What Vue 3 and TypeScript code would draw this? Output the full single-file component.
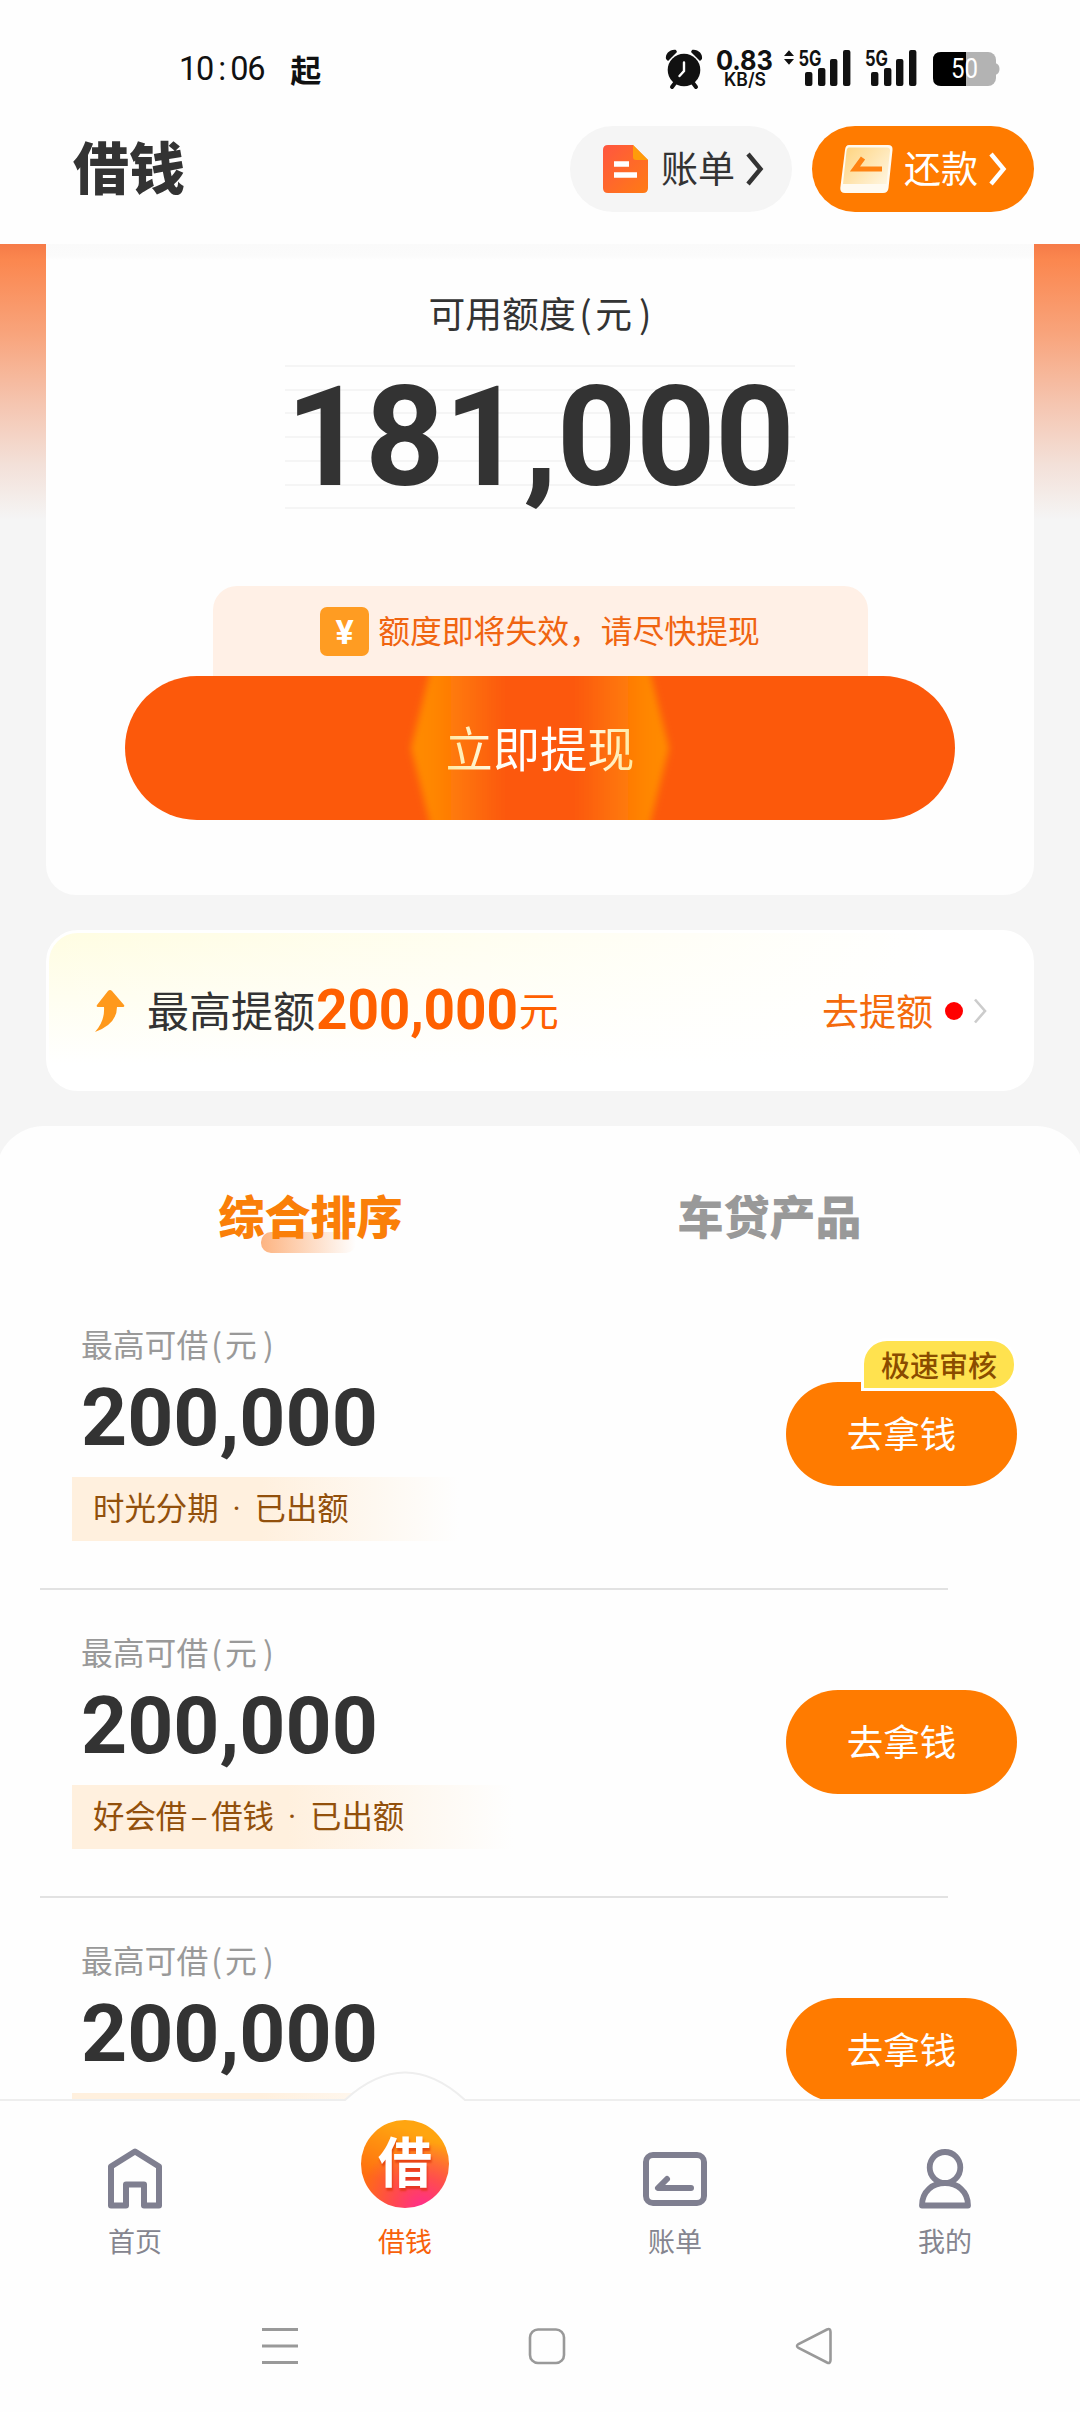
<script setup lang="ts">
interface Product {
  amount: string
  name: string[]
  status: string
  badge?: string
}

const products: Product[] = [
  { amount: '200,000', name: ['时光分期'], status: '已出额', badge: '极速审核' },
  { amount: '200,000', name: ['好会借', '借钱'], status: '已出额' },
  { amount: '200,000', name: ['时光分期'], status: '已出额' },
]

const tabs: string[] = ['综合排序', '车贷产品']
const bars: number[][] = [
  [0, 22, 14],
  [13, 18, 18],
  [25, 9, 27],
  [38, 0, 36],
]
</script>

<template>
  <div class="screen">
    <div class="status">
      <div class="status-left">
        <span class="time">10<i>:</i>06</span>
        <b class="app-mark">起</b>
      </div>
      <div class="status-right">
        <svg class="alarm" width="38" height="40" viewBox="0 0 38 40">
          <circle cx="19" cy="21" r="16.3" fill="#111" />
          <path d="M1 10C0 5 5 0 11 1L12 3L3 12ZM37 10C38 5 33 0 27 1L26 3L35 12Z" fill="#111" />
          <path d="M10 34L7 38M28 34L31 38" stroke="#111" stroke-width="4" stroke-linecap="round" />
          <path d="M19 13.5V22L14.5 27" fill="none" stroke="#fff" stroke-width="2.4" stroke-linecap="round" />
        </svg>
        <svg class="speed" width="58" height="40" viewBox="0 0 58 40">
          <text x="0" y="21" class="sp-num" textLength="57" lengthAdjust="spacingAndGlyphs">0.83</text>
          <text x="8" y="37" class="sp-unit" textLength="42" lengthAdjust="spacingAndGlyphs">KB/S</text>
        </svg>
        <svg class="signal-a" width="66" height="40" viewBox="0 0 66 40">
          <path d="M0 7L5 1.2L10 7ZM0 10L5 15.8L10 10Z" fill="#111" />
          <text x="14.5" y="16.5" class="net" textLength="23" lengthAdjust="spacingAndGlyphs">5G</text>
          <rect v-for="b in bars" :key="b[0]" :x="b[0] + 21" :y="b[1] + 1" width="7.4" :height="b[2]" rx="2" fill="#111" />
        </svg>
        <svg class="signal-b" width="52" height="40" viewBox="0 0 52 40">
          <text x="0" y="16.5" class="net" textLength="23" lengthAdjust="spacingAndGlyphs">5G</text>
          <rect v-for="b in bars" :key="b[0]" :x="b[0] + 6" :y="b[1] + 1" width="7.4" :height="b[2]" rx="2" fill="#111" />
        </svg>
        <svg class="battery" width="67" height="34" viewBox="0 0 67 34">
          <rect x="0" y="0" width="63" height="34" rx="8" fill="#b3b3b3" />
          <path d="M62 11Q66.5 12 66.5 17T62 23Z" fill="#b3b3b3" />
          <path d="M8 0H33V34H8Q0 34 0 26V8Q0 0 8 0Z" fill="#000" />
          <text x="18" y="26" class="pct" textLength="27" lengthAdjust="spacingAndGlyphs">50</text>
        </svg>
      </div>
    </div>

    <header class="header">
      <h1 class="title">借钱</h1>
      <div class="pill pill-bill">
        <svg width="45" height="50" viewBox="0 0 45 50">
          <defs>
            <linearGradient id="doc" x1="0" y1="0" x2="1" y2="1">
              <stop offset="0" stop-color="#ff5640" /><stop offset="1" stop-color="#ff7b14" />
            </linearGradient>
          </defs>
          <path d="M5 1H30L45 16V44Q45 49 40 49H5Q0 49 0 44V6Q0 1 5 1Z" fill="url(#doc)" />
          <path d="M30 1L45 16H33Q30 16 30 13Z" fill="#ff9c0a" />
          <path d="M11 20H26M11 31H34" stroke="#fff" stroke-width="5.4" />
        </svg>
        <span>账单</span>
        <svg class="chev" width="20" height="32" viewBox="0 0 20 32"><path d="M3 1L15.5 16L3 31" fill="none" stroke="#333" stroke-width="4.4" /></svg>
      </div>
      <div class="pill pill-repay">
        <svg width="53" height="50" viewBox="0 0 53 50">
          <defs>
            <linearGradient id="card" x1="0" y1=".2" x2="1" y2=".9">
              <stop offset="0" stop-color="#ffd685" /><stop offset="1" stop-color="#fff5df" />
            </linearGradient>
          </defs>
          <path d="M9 1H48Q53 1 52.5 6L48.5 44Q48 49 43 49H5Q0 49 .3 44L5 6Q5.5 1 9 1Z" fill="#fffaf0" />
          <path d="M9 3.5H47Q50.5 3.5 50 7L46.5 40H3L6.5 7Q7 3.5 9 3.5Z" fill="url(#card)" />
          <path d="M23 14L15 25H42" fill="none" stroke="#ff8212" stroke-width="5.2" />
        </svg>
        <span>还款</span>
        <svg class="chev" width="20" height="32" viewBox="0 0 20 32"><path d="M3 1L15.5 16L3 31" fill="none" stroke="#fff" stroke-width="4.4" /></svg>
      </div>
    </header>

    <main class="content">
      <section class="hero">
        <div class="quota">
          <div class="quota-label">可用额度<i>(</i>元<i>)</i></div>
          <div class="quota-num">181,000</div>
          <div class="notice">
            <span class="yen">¥</span>
            <span class="notice-text">额度即将失效，请尽快提现</span>
          </div>
          <div class="cta">
            <svg class="cta-glow" width="290" height="144" viewBox="0 0 290 144">
              <defs>
                <linearGradient id="glow" x1="0" x2="1">
                  <stop offset="0" stop-color="#ff8c05" /><stop offset=".09" stop-color="#ff8605" />
                  <stop offset=".36" stop-color="#fc590b" /><stop offset=".64" stop-color="#fc590b" />
                  <stop offset=".91" stop-color="#ff8605" /><stop offset="1" stop-color="#ff8c05" />
                </linearGradient>
                <filter id="soft" x="-10%" y="-20%" width="120%" height="140%"><feGaussianBlur stdDeviation="3.5" /></filter>
              </defs>
              <path d="M39 -20L16 72L39 164H251L274 72L251 -20Z" fill="url(#glow)" filter="url(#soft)" />
            </svg>
            <span class="cta-text">立即提现</span>
          </div>
        </div>
      </section>

      <section class="raise">
        <svg width="30" height="42" viewBox="0 0 30 42">
          <path d="M15 0Q16 0 17 1L29 15Q30 17 28 17H22Q22 34 0 42Q10 31 9 17H3Q1 17 2 15L13 1Q14 0 15 0Z" fill="#ff991c" />
        </svg>
        <span class="raise-text">最高提额</span>
        <span class="raise-num">200,000</span>
        <span class="raise-unit">元</span>
        <span class="raise-go">去提额</span>
        <span class="dot"></span>
        <svg class="raise-chev" width="14" height="26" viewBox="0 0 14 26"><path d="M2 1.5L12 13L2 24.5" fill="none" stroke="#ccc" stroke-width="2.6" /></svg>
      </section>

      <section class="panel">
        <nav class="tabs">
          <div v-for="(t, i) in tabs" :key="t" class="tab" :class="{ active: i === 0 }"><span>{{ t }}</span></div>
        </nav>
        <article v-for="(p, i) in products" :key="i" class="row">
          <div class="info">
            <div class="row-label">最高可借<i>(</i>元<i>)</i></div>
            <div class="row-num">{{ p.amount }}</div>
            <div class="tag">
              <template v-for="(part, n) in p.name" :key="n"><em v-if="n > 0">–</em>{{ part }}</template><i>·</i>{{ p.status }}
            </div>
          </div>
          <div class="get">
            去拿钱
            <span v-if="p.badge" class="badge">{{ p.badge }}</span>
          </div>
        </article>
      </section>
    </main>

    <footer class="tabbar">
      <svg class="edge" width="1080" height="32" viewBox="0 0 1080 32">
        <path d="M0 29H345Q375 1.5 405 1.5T465 29H1080V32H0Z" fill="#fefefe" />
        <path d="M0 29H345Q375 1.5 405 1.5T465 29H1080" fill="none" stroke="#eee" stroke-width="2" />
      </svg>
      <div class="item">
        <div class="ico">
          <svg width="54" height="62" viewBox="0 0 54 62">
            <path d="M3 18.5L27 3.5L51 18.5V57.5H36V36.5H18V57.5H3Z" fill="none" stroke="#7f7f90" stroke-width="6" stroke-linejoin="round" />
          </svg>
        </div>
        <span>首页</span>
      </div>
      <div class="item on">
        <div class="ico"><div class="coin"><b>借</b></div></div>
        <span>借钱</span>
      </div>
      <div class="item">
        <div class="ico">
          <svg width="64" height="56" viewBox="0 0 64 56">
            <rect x="3" y="4" width="58" height="48" rx="7" fill="none" stroke="#7f7f90" stroke-width="6" />
            <path d="M24 28L15 37H48" fill="none" stroke="#7f7f90" stroke-width="6" stroke-linecap="round" stroke-linejoin="round" />
          </svg>
        </div>
        <span>账单</span>
      </div>
      <div class="item">
        <div class="ico">
          <svg width="52" height="62" viewBox="0 0 52 62">
            <ellipse cx="26" cy="19.5" rx="15.3" ry="15.5" fill="none" stroke="#7f7f90" stroke-width="5.8" />
            <path d="M3 57.5C3 43 14 35 26 35S49 43 49 57.5Z" fill="none" stroke="#7f7f90" stroke-width="5.8" stroke-linejoin="round" />
          </svg>
        </div>
        <span>我的</span>
      </div>
    </footer>

    <div class="sysnav">
      <svg width="38" height="38" viewBox="0 0 38 38"><path d="M1 2.5H37M1 19H37M1 35.5H37" stroke="#999" stroke-width="3" /></svg>
      <svg width="38" height="38" viewBox="0 0 38 38"><rect x="2" y="2.5" width="34" height="33.5" rx="8" fill="none" stroke="#999" stroke-width="2.6" /></svg>
      <svg width="38" height="38" viewBox="0 0 38 38"><path d="M32 2.5Q35.5 1 35.5 5V33Q35.5 37 32 35.5L3.5 21Q0.5 19 3.5 17Z" fill="none" stroke="#999" stroke-width="2.6" /></svg>
    </div>
  </div>
</template>

<style>
body { margin: 0; background: #fff; }
</style>

<style scoped>
* { box-sizing: border-box; }
i, em { font-style: normal; }
svg { display: block; flex: none; overflow: visible; }
.screen {
  width: 1080px;
  height: 2412px;
  overflow: hidden;
  display: flex;
  flex-direction: column;
  background: #fefefe;
  color: #333;
  font-family: "Noto Sans CJK SC", sans-serif;
  white-space: nowrap;
}

.status { height: 100px; flex: none; padding: 38px 80px 0 179px; display: flex; justify-content: space-between; align-items: center; }
.status-left { display: flex; align-items: center; height: 62px; }
.time { font: 400 32.5px/62px Roboto, sans-serif; color: #111; letter-spacing: -1.2px; }
.time i { display: inline-block; width: 17px; text-align: center; }
.app-mark { font-size: 31px; line-height: 60px; color: #111; margin-left: 26px; }
.status-right { display: flex; align-items: center; }
.speed { margin-left: 13px; }
.signal-a { margin-left: 10px; }
.signal-b { margin-left: 15px; }
.battery { margin-left: 16px; }
.sp-num { font: 700 26.5px Inter, sans-serif; fill: #111; }
.sp-unit { font: 600 18.5px Inter, sans-serif; fill: #111; }
.net { font: 700 21px Inter, sans-serif; fill: #111; }
.pct { font: 400 27px Roboto, sans-serif; fill: #fff; }

.header { height: 144px; flex: none; padding: 26px 46px 32px 73px; display: flex; align-items: center; }
.title { margin: 0 auto 0 0; font-size: 56px; line-height: 76px; height: 84px; font-weight: 900; }
.pill { width: 222px; height: 86px; border-radius: 43px; display: flex; align-items: center; font-size: 37px; }
.pill span { line-height: 81px; height: 84px; }
.pill-bill { background: #f5f5f5; padding-left: 33px; margin-right: 20px; }
.pill-bill span { margin-left: 13px; }
.pill-repay { background: #ff7b00; padding-left: 28px; color: #fff; }
.pill-repay span { margin-left: 11px; }
.chev { margin-left: 10px; }

.content { height: 1855px; flex: none; overflow: hidden; background: #f5f5f5; }
.hero { padding: 0 46px; background: linear-gradient(180deg, #f67b48 0, #fb874f 16px, #f8a47c 90px, #f5c5b0 160px, #f3e0d8 220px, #f5f5f5 276px); }
.quota {
  height: 651px;
  border-radius: 0 0 30px 30px;
  background: linear-gradient(#fafafa, #fbfbfb 12px, #fefefe 16px);
  display: flex;
  flex-direction: column;
  align-items: center;
}
.quota-label { height: 60px; line-height: 60px; margin-top: 38px; font-size: 36.8px; }
.quota-label i, .row-label i { display: inline-block; width: .53em; text-align: center; }
.quota-label i:last-child, .row-label i:last-child { text-align: right; }
.quota-num {
  margin-top: 23px;
  width: 510px;
  height: 144px;
  font: 700 139px/145px Roboto, sans-serif;
  letter-spacing: -.6px;
  text-align: center;
  background: repeating-linear-gradient(180deg, #f5f5f5 0 2px, transparent 2px 23.7px);
}
.notice {
  margin-top: 77px;
  width: 655px;
  height: 90px;
  border-radius: 24px 24px 0 0;
  background: #fff0e6;
  display: flex;
  align-items: center;
  justify-content: center;
  gap: 9px;
  color: #f06410;
}
.notice-text { font-size: 31.8px; line-height: 56px; height: 60px; }
.yen { width: 49px; height: 49px; border-radius: 7px; background: #ff9c22; color: #fff; text-align: center; font: 700 34px/51px Roboto, sans-serif; }
.cta { width: 830px; height: 144px; flex: none; border-radius: 72px; background: #fc590b; display: grid; place-items: center; overflow: hidden; }
.cta > * { grid-area: 1 / 1; }
.cta-text {
  font-size: 47.3px;
  line-height: 78px;
  height: 80px;
  background: linear-gradient(90deg, #ffe9a0, #fff 35%, #fff 65%, #ffe9a0);
  background-clip: text;
  color: transparent;
}

.raise {
  height: 161px;
  margin: 35px 46px 0;
  padding: 0 44px 0 46px;
  border: 3px solid #fff;
  border-radius: 32px;
  background: linear-gradient(90deg, rgba(255,255,255,0) 0, #fff 90%), linear-gradient(180deg, #fffde2 0, #fff 85%);
  display: flex;
  align-items: center;
}
.raise-text { font-size: 42px; line-height: 76px; height: 80px; margin-left: 22px; }
.raise-num { font: 700 55px/78px Roboto, sans-serif; height: 80px; color: #ff6000; margin-left: 1px; letter-spacing: -.15px; }
.raise-unit { font-size: 40px; line-height: 76px; height: 80px; color: #ff6000; margin-left: 1px; }
.raise-go { font-size: 37px; line-height: 78px; height: 80px; color: #f46a0c; margin-left: auto; }
.dot { width: 18px; height: 18px; border-radius: 50%; background: #f00; margin-left: 12px; }
.raise-chev { margin-left: 10px; }

.panel { margin: 35px -4px 0; padding: 0 4px; height: 1100px; background: #fefefe; border-radius: 48px 48px 0 0; }
.tabs { height: 156px; padding: 46px 81px 0; display: flex; }
.tab { flex: 1; text-align: center; font-size: 46px; line-height: 84px; font-weight: 900; color: #999; }
.tab span { position: relative; display: inline-block; }
.tab.active { color: #fa7f08; }
.tab.active span::after {
  content: "";
  position: absolute;
  left: 42px;
  top: 60px;
  width: 95px;
  height: 21px;
  border-radius: 10px;
  background: linear-gradient(90deg, rgba(253,172,116,.9), rgba(255,190,150,0));
  z-index: -1;
}
.tab.active span { z-index: 0; }
.row { height: 308px; margin-left: 40px; width: 1040px; display: flex; justify-content: space-between; padding: 36px 63px 0 32px; background: linear-gradient(#e2e2e2, #e2e2e2) 0 100% / 908px 2px no-repeat; }
.row-label { height: 54px; line-height: 51px; font-size: 31.8px; color: #999; margin-left: 9px; }
.row-num { font: 700 80.5px/80px Roboto, sans-serif; margin: 6px 0 0 9px; height: 99px; }
.tag {
  width: fit-content;
  height: 64px;
  padding: 0 118px 0 21px;
  font-size: 31.4px;
  line-height: 59px;
  color: #92500c;
  background: linear-gradient(90deg, #fff0de 0, #fff0de 48%, rgba(255,240,222,0) 98%);
}
.tag i { display: inline-block; width: 36px; text-align: center; font-family: Roboto, sans-serif; }
.tag em { display: inline-block; width: 24px; text-align: center; }
.get { position: relative; width: 231px; height: 104px; margin-top: 64px; border-radius: 52px; background: #ff7b00; color: #fff; text-align: center; font-size: 36.5px; line-height: 101px; }
.badge {
  position: absolute;
  left: 75px;
  top: -44px;
  width: 156px;
  height: 53px;
  border: 3px solid #fff;
  border-radius: 26px 26px 26px 0;
  background: #ffe24f;
  color: #8a4c00;
  font-size: 29px;
  line-height: 46px;
  font-weight: 500;
}

.tabbar { position: relative; height: 191px; flex: none; background: #fefefe; display: flex; }
.edge { position: absolute; left: 0; top: -28px; }
.item { position: relative; flex: 1; display: flex; flex-direction: column; align-items: center; font-size: 27px; line-height: 40px; color: #85858f; }
.ico { height: 122px; display: flex; align-items: flex-end; }
.ico svg { margin-bottom: 11px; }
.item:nth-child(4) .ico svg { margin-bottom: 14px; }
.coin {
  width: 88px;
  height: 88px;
  margin-bottom: 13px;
  border-radius: 50%;
  text-align: center;
  background: radial-gradient(circle at 70% 100%, #ff2d8c 0, rgba(255,60,100,.75) 28%, rgba(255,100,20,0) 62%), linear-gradient(200deg, #ffa510 20%, #ff6f10 70%);
}
.coin b { font-size: 54px; line-height: 80px; color: #fff; text-shadow: 1px 3px 2px rgba(220,50,10,.7); }
.item.on { color: #f8610a; }

.sysnav { height: 122px; display: flex; justify-content: center; gap: 229px; padding: 37px 0 0 13px; }
</style>
